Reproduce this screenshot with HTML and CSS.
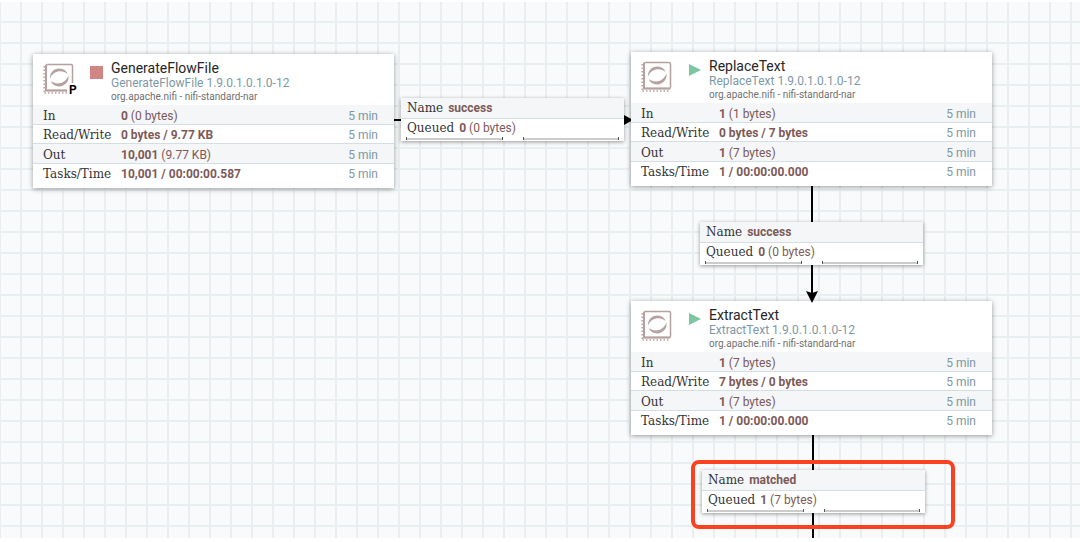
FILE: index.html
```html
<!DOCTYPE html>
<html lang="en">
<head>
<meta charset="utf-8">
<title>NiFi Flow</title>
<link rel="stylesheet" href="styles.css">
</head>
<body>
<svg width="0" height="0" class="defs" aria-hidden="true">
  <defs>
    <symbol id="processor" viewBox="0 0 32 32">
      <g fill="none" stroke="#b5a1a0">
        <rect x="3" y="1.500" width="26.500" height="26" rx="1.500" stroke-width="1.500"/>
        <path d="M1.200 3v27M1.500 30h28" stroke-width="1.500" stroke-dasharray="1.500 2"/>
        <path d="M3 2v25.500H29" stroke-width="2"/>
      </g>
      <g fill="#b5a1a0">
        <path d="M7 15.500C6.500 8 14 3.500 20.500 6.500c2 1 3.500 2.500 4 4.500-5-4.500-14-4-17.500 4.500z"/>
        <path d="M25.500 12.500C26.500 20.500 19 25.500 12 22.500c-2-1-3.500-2.500-4-4.500 5.500 4.500 14 3 17.500-5.500z"/>
      </g>
    </symbol>
  </defs>
</svg>
<main class="canvas">
  <svg class="wires" aria-hidden="true">
    <g stroke="#000" stroke-width="2">
      <path d="M394 120H626"/>
      <path d="M812 186V296"/>
      <path d="M813 435V538"/>
    </g>
    <path d="M624 115l9 5-9 5z"/>
  </svg>

  <article class="processor generate">
    <header class="head">
      <span class="icon"><svg><use href="#processor"/></svg><b class="primary">P</b></span>
      <svg class="status" viewBox="0 0 13 13"><path fill="#d18686" d="M0 0h13v13H0z"/></svg>
      <div class="titles"><h2>GenerateFlowFile</h2><p class="type">GenerateFlowFile 1.9.0.1.0.1.0-12</p><p class="bundle">org.apache.nifi - nifi-standard-nar</p></div>
    </header>
    <table class="stats">
      <tr><th>In</th><td><b>0</b> (0 bytes)</td><td class="time">5 min</td></tr>
      <tr><th>Read/Write</th><td><b>0 bytes / 9.77 KB</b></td><td class="time">5 min</td></tr>
      <tr><th>Out</th><td><b>10,001</b> (9.77 KB)</td><td class="time">5 min</td></tr>
      <tr><th>Tasks/Time</th><td><b>10,001 / 00:00:00.587</b></td><td class="time">5 min</td></tr>
    </table>
  </article>

  <article class="processor replace">
    <header class="head">
      <span class="icon"><svg><use href="#processor"/></svg></span>
      <svg class="status" viewBox="0 0 13 13"><path fill="#7dc7a0" d="M1 0l12 6-12 6z"/></svg>
      <div class="titles"><h2>ReplaceText</h2><p class="type">ReplaceText 1.9.0.1.0.1.0-12</p><p class="bundle">org.apache.nifi - nifi-standard-nar</p></div>
    </header>
    <table class="stats">
      <tr><th>In</th><td><b>1</b> (1 bytes)</td><td class="time">5 min</td></tr>
      <tr><th>Read/Write</th><td><b>0 bytes / 7 bytes</b></td><td class="time">5 min</td></tr>
      <tr><th>Out</th><td><b>1</b> (7 bytes)</td><td class="time">5 min</td></tr>
      <tr><th>Tasks/Time</th><td><b>1 / 00:00:00.000</b></td><td class="time">5 min</td></tr>
    </table>
  </article>

  <article class="processor extract">
    <header class="head">
      <span class="icon"><svg><use href="#processor"/></svg></span>
      <svg class="status" viewBox="0 0 13 13"><path fill="#7dc7a0" d="M1 0l12 6-12 6z"/></svg>
      <div class="titles"><h2>ExtractText</h2><p class="type">ExtractText 1.9.0.1.0.1.0-12</p><p class="bundle">org.apache.nifi - nifi-standard-nar</p></div>
    </header>
    <table class="stats">
      <tr><th>In</th><td><b>1</b> (7 bytes)</td><td class="time">5 min</td></tr>
      <tr><th>Read/Write</th><td><b>7 bytes / 0 bytes</b></td><td class="time">5 min</td></tr>
      <tr><th>Out</th><td><b>1</b> (7 bytes)</td><td class="time">5 min</td></tr>
      <tr><th>Tasks/Time</th><td><b>1 / 00:00:00.000</b></td><td class="time">5 min</td></tr>
    </table>
  </article>

  <svg class="wires" aria-hidden="true">
    <path d="M806 291l6 2 6-2-6 12z"/>
  </svg>

  <section class="connection to-replace">
    <p class="name"><span class="label">Name</span><b>success</b></p>
    <p class="queued"><span class="label">Queued</span><span><b>0</b> (0 bytes)</span></p>
    <div class="pressure"><i></i><i></i></div>
  </section>
  <section class="connection to-extract">
    <p class="name"><span class="label">Name</span><b>success</b></p>
    <p class="queued"><span class="label">Queued</span><span><b>0</b> (0 bytes)</span></p>
    <div class="pressure"><i></i><i></i></div>
  </section>
  <section class="connection matched">
    <p class="name"><span class="label">Name</span><b>matched</b></p>
    <p class="queued"><span class="label">Queued</span><span><b>1</b> (7 bytes)</span></p>
    <div class="pressure"><i></i><i></i></div>
  </section>
  <div class="highlight"></div>
</main>
</body>
</html>
```
FILE: styles.css
```css
* { box-sizing: border-box; }

body {
  margin: 0;
  padding: 2px 0 4px;
  background: #fff;
  font-family: Roboto, "Liberation Sans", sans-serif;
  font-size: 12px;
  color: #7d5a58;
}

h2, p { margin: 0; }

.defs { position: absolute; }

.canvas {
  min-height: calc(100vh - 6px);
  background-color: #f9fafc;
  background-image:
    linear-gradient(90deg, #e9eff0 2px, transparent 2px),
    linear-gradient(#e9eff0 2px, transparent 2px);
  background-size: 21px 21px;
  background-position: 20px 19px;
}

.wires {
  position: absolute;
  top: 0;
  left: 0;
  width: 100%;
  height: 538px;
}

/* Processors */
.processor {
  position: absolute;
  width: 361px;
  background: #fff;
  box-shadow: 0 1px 5px rgba(0, 0, 0, 0.4);
}

.generate { left: 33px; top: 54px; }
.replace { left: 631px; top: 52px; }
.extract { left: 631px; top: 301px; }

.head {
  display: flex;
  height: 51px;
  padding: 6px 10px 0;
}

.icon {
  position: relative;
  width: 46px;
  padding-top: 3px;
}

.icon svg {
  display: block;
  width: 32px;
  height: 32px;
}

.primary {
  position: absolute;
  left: 24px;
  top: 23px;
  padding: 0 2px;
  background: #fff;
  color: #000;
  font-size: 12px;
  line-height: 14px;
}

.status {
  width: 13px;
  height: 13px;
  margin: 6px 0 0 1px;
}

.titles { padding-left: 8px; }

h2 {
  color: #262626;
  font-size: 14px;
  font-weight: 400;
  line-height: 16px;
}

.type {
  color: #7d98a5;
  font-size: 12px;
  line-height: 14px;
}

.bundle {
  color: #707070;
  font-size: 10px;
  line-height: 14px;
}

.stats {
  width: 100%;
  margin-bottom: 5px;
  border-collapse: collapse;
  table-layout: fixed;
}

.stats th, .stats td {
  height: 19px;
  padding: 1px 0 0;
  line-height: 18px;
}

.stats tr:nth-child(odd) { background: #f4f6f7; }
.stats tr:nth-child(odd) td, .stats tr:nth-child(odd) th { height: 20px; }
.stats tr:not(:last-child) { box-shadow: inset 0 -1px #d3dee2; }
.stats tr:last-child { background: #fff; }

.stats th {
  width: 88px;
  padding-left: 10px;
  text-align: left;
  font-weight: 400;
}

.stats th, .label {
  color: #333;
  font-family: "Roboto Slab", "DejaVu Serif", serif;
  font-size: 12px;
}

.stats .time {
  width: 70px;
  padding-right: 16px;
  text-align: right;
  color: #7d98a5;
}

/* Connections */
.connection {
  position: absolute;
  width: 223px;
  height: 43px;
  background: #fff;
  box-shadow: 0 1px 4px rgba(0, 0, 0, 0.4);
}

.to-replace { left: 401px; top: 98px; }
.to-extract { left: 700px; top: 222px; }
.matched { left: 702px; top: 470px; }

.name, .queued {
  display: flex;
  gap: 5px;
  padding: 0 6px;
}

.name {
  padding-top: 1px;
  background: #f4f6f7;
  border-bottom: 1px solid #d3dee2;
  line-height: 19px;
}

.queued { line-height: 18px; }

.pressure {
  display: flex;
  gap: 20px;
  padding: 0 5px;
}

.pressure i {
  flex: 1;
  height: 3px;
  border: solid #555;
  border-width: 0 1px;
  background: linear-gradient(#ccc, #ccc) 0 1px / 100% 2px no-repeat;
}

.highlight {
  position: absolute;
  left: 691px;
  top: 460px;
  width: 264px;
  height: 69px;
  border: 4px solid #fb4220;
  border-radius: 8px;
}
```
